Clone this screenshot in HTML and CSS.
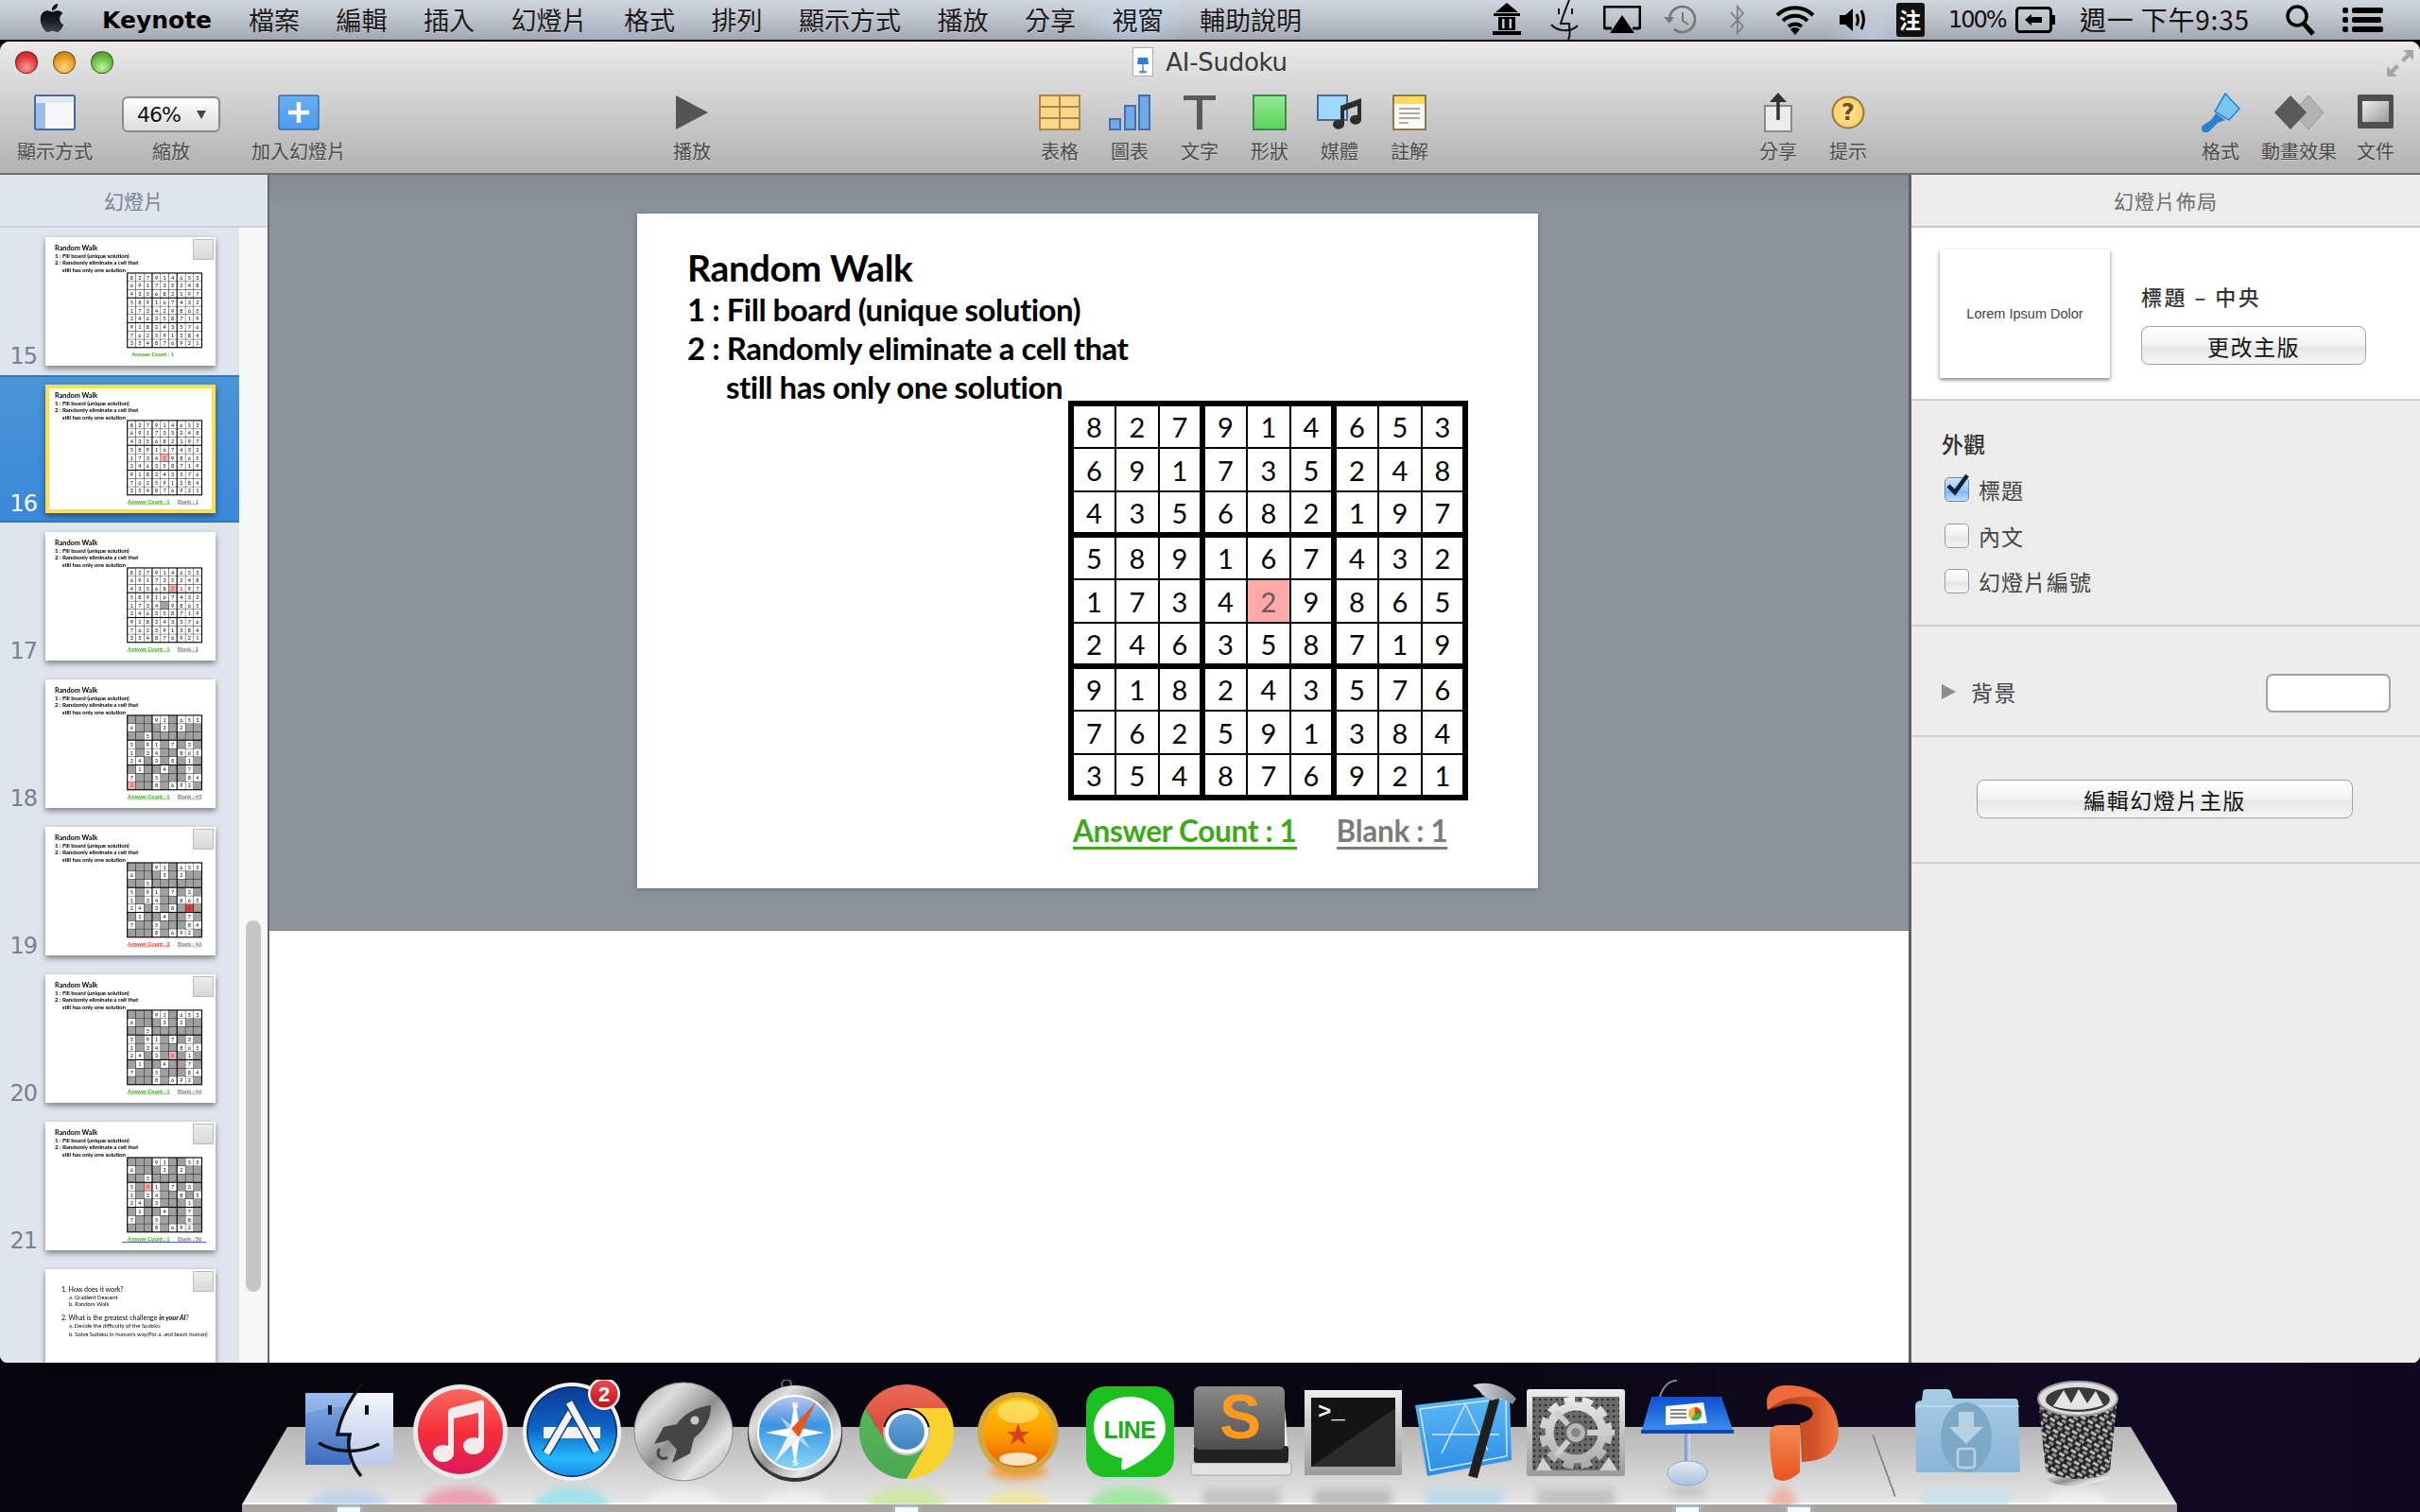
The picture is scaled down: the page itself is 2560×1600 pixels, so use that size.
FILE: index.html
```html
<!DOCTYPE html>
<html lang="zh-Hant">
<head>
<meta charset="utf-8">
<title>AI-Sudoku</title>
<link rel="stylesheet" href="styles.css">
</head>
<body>
<header class="menubar">
  <div class="menu-left">
    <svg class="apple" viewBox="0 0 24 24"><path fill="url(#appleGrad)" d="M12.152 6.896c-.948 0-2.415-1.078-3.96-1.04-2.04.027-3.91 1.183-4.961 3.014-2.117 3.675-.546 9.103 1.519 12.09 1.013 1.454 2.208 3.09 3.792 3.039 1.52-.065 2.09-.987 3.935-.987 1.831 0 2.35.987 3.96.948 1.637-.026 2.676-1.48 3.676-2.948 1.156-1.688 1.636-3.325 1.662-3.415-.039-.013-3.182-1.221-3.22-4.857-.026-3.04 2.48-4.494 2.597-4.559-1.429-2.09-3.623-2.324-4.39-2.376-2-.156-3.675 1.09-4.61 1.09zM15.53 3.83c.843-1.012 1.4-2.427 1.245-3.83-1.207.052-2.662.805-3.532 1.818-.78.896-1.454 2.338-1.273 3.714 1.338.104 2.715-.688 3.559-1.701"/></svg>
    <span class="app-name">Keynote</span>
    <nav class="menu-items">
      <span>檔案</span><span>編輯</span><span>插入</span><span>幻燈片</span><span>格式</span><span>排列</span><span>顯示方式</span><span>播放</span><span>分享</span><span>視窗</span><span>輔助說明</span>
    </nav>
  </div>
  <div class="menu-right">
    <span class="status"><svg width="36" height="38" viewBox="0 0 36 38"><path d="M18 1 L30 11 H6Z M4 12 H32 V15 H4Z M9 16 H27 V30 H9Z M3 31 H33 V35 H3Z"/><rect x="13" y="18" width="2.5" height="10" fill="#c8ccd4"/><rect x="20.500" y="18" width="2.500" height="10" fill="#c8ccd4"/></svg></span>
    <span class="status"><svg width="32" height="42" viewBox="0 0 32 42"><path d="M21 0 C17 10 14 18 12 25 H21 C21 31 23 37 20 42" fill="none" stroke="#111" stroke-width="2"/><path d="M2 26 C8 33 22 35 30 27" fill="none" stroke="#111" stroke-width="2"/><path d="M10 9 V15 M24 9 V15" stroke="#111" stroke-width="2"/></svg></span>
    <span class="status"><svg width="40" height="30" viewBox="0 0 40 30"><path d="M9 24 H3 Q1 24 1 22 V3 Q1 1 3 1 H37 Q39 1 39 3 V22 Q39 24 37 24 H31" fill="none" stroke="#000" stroke-width="3"/><path d="M20 10 L33 29 H7Z"/></svg></span>
    <span class="status"><svg width="36" height="34" viewBox="0 0 36 34"><path d="M7 17 A13.500 13.500 0 1 1 12 27" fill="none" stroke="#777" stroke-width="2.600"/><path d="M1 14 H12 L7 21Z" fill="#777"/><path d="M21 9 V18 L27 22" fill="none" stroke="#777" stroke-width="2"/></svg></span>
    <span class="status"><svg width="18" height="34" viewBox="0 0 18 34"><path d="M2 9 L15 24 L9 31 V3 L15 10 L2 25" fill="none" stroke="#7d8087" stroke-width="1.800"/></svg></span>
    <span class="status"><svg width="44" height="34" viewBox="0 0 44 34"><path d="M3 12 A27 27 0 0 1 41 12 M9 18 A19 19 0 0 1 35 18 M15 24 A11 11 0 0 1 29 24" fill="none" stroke="#000" stroke-width="4"/><path d="M22 33 L17 27 A7 7 0 0 1 27 27Z"/></svg></span>
    <span class="status"><svg width="30" height="28" viewBox="0 0 30 28"><path d="M1 9 H7 L15 2 V26 L7 19 H1Z"/><path d="M19 8 Q22 14 19 20 M24 4 Q29 14 24 24" fill="none" stroke="#000" stroke-width="3"/></svg></span>
    <span class="status"><span class="ime">注</span></span>
    <span class="battery-pct">100%</span>
    <svg class="battery" width="43" height="28" viewBox="0 0 43 28"><rect x="1.500" y="1.500" width="36" height="25" rx="3" fill="none" stroke="#000" stroke-width="3"/><rect x="39" y="9" width="3" height="10"/><path d="M10 14 L17 8 V11 H28 V17 H17 V20Z"/></svg>
    <span class="clock">週一 下午9:35</span>
    <svg class="search" width="32" height="34" viewBox="0 0 32 34"><circle cx="13" cy="13" r="10" fill="none" stroke="#000" stroke-width="3.500"/><path d="M20 21 L30 32" stroke="#000" stroke-width="5"/></svg>
    <svg class="notif" width="44" height="26" viewBox="0 0 44 26"><rect x="0" y="0" width="6" height="6" rx="2"/><rect x="0" y="10" width="6" height="6" rx="2"/><rect x="0" y="20" width="6" height="6" rx="2"/><rect x="10" y="0" width="33" height="6" rx="2"/><rect x="10" y="10" width="31" height="6" rx="2"/><rect x="10" y="20" width="33" height="6" rx="2"/></svg>
  </div>
</header>

<main class="window">
  <section class="chrome">
    <div class="titlebar">
      <div class="lights">
        <i class="light light-red"></i><i class="light light-amber"></i><i class="light light-green"></i>
      </div>
      <div class="doc-title">
        <svg width="22" height="31" viewBox="0 0 22 31"><rect x=".5" y=".5" width="21" height="30" fill="#fff" stroke="#aaa"/><path d="M6 11 H16 L17 18 H5Z" fill="#2b7fd8"/><path d="M11 18 V25" stroke="#6b8bb0" stroke-width="1.500"/><ellipse cx="11" cy="26" rx="4" ry="1.500" fill="#6b8bb0"/></svg>
        <span>AI-Sudoku</span>
      </div>
      <div class="full">
        <svg width="28" height="28" viewBox="0 0 28 28"><path d="M17 0 H28 V11 L24 7 L18 13 L15 10 L21 4Z M11 28 H0 V17 L4 21 L10 15 L13 18 L7 24Z" fill="#a5a5a5"/></svg>
      </div>
    </div>
    <div class="toolbar">
      <div class="tool tool-view">
        <svg class="tool-icon" width="44" height="38" viewBox="0 0 44 38"><rect x="1" y="1" width="42" height="36" rx="2" fill="#f7f7f9" stroke="#47699a" stroke-width="2"/><rect x="2" y="2" width="40" height="7" fill="#dfe7f3"/><rect x="2" y="9" width="10" height="27" fill="#9cbdea"/></svg>
        <span>顯示方式</span>
      </div>
      <div class="tool tool-zoom">
        <div class="zoom-box"><b>46%</b><i class="caret"></i></div>
        <span>縮放</span>
      </div>
      <div class="tool tool-add">
        <svg class="tool-icon" width="44" height="38" viewBox="0 0 44 38"><rect x="1" y="1" width="42" height="36" rx="2" fill="url(#addGrad)" stroke="#3e6ea8" stroke-width="1.500"/><path d="M22 8 V30 M11 19 H33" stroke="#fff" stroke-width="4.500"/></svg>
        <span>加入幻燈片</span>
      </div>
      <div class="tool tool-play">
        <svg class="tool-icon" width="36" height="38" viewBox="0 0 36 38"><path d="M1 1 L35 19 L1 37Z" fill="#555"/></svg>
        <span>播放</span>
      </div>
      <div class="tool tool-table">
        <svg class="tool-icon" width="44" height="38" viewBox="0 0 44 38"><rect x="1" y="1" width="42" height="36" fill="#fcd787" stroke="#a9864e" stroke-width="2"/><path d="M22 1 V37 M1 13 H43 M1 25 H43" stroke="#a9864e" stroke-width="2"/></svg>
        <span>表格</span>
      </div>
      <div class="tool">
        <svg class="tool-icon" width="44" height="38" viewBox="0 0 44 38"><g fill="#6ea9ea" stroke="#4770a8" stroke-width="2"><rect x="1" y="26" width="11" height="11"/><rect x="17" y="12" width="11" height="25"/><rect x="32" y="1" width="11" height="36"/></g></svg>
        <span>圖表</span>
      </div>
      <div class="tool">
        <svg class="tool-icon" width="36" height="38" viewBox="0 0 36 38"><path d="M1 1 H35 V6 H21 V37 H15 V6 H1Z" fill="#5a5a5a"/></svg>
        <span>文字</span>
      </div>
      <div class="tool">
        <svg class="tool-icon" width="36" height="38" viewBox="0 0 36 38"><rect x="1" y="1" width="34" height="36" fill="url(#shapeGrad)" stroke="#3f8a4c" stroke-width="2"/></svg>
        <span>形狀</span>
      </div>
      <div class="tool">
        <svg class="tool-icon" width="48" height="38" viewBox="0 0 48 38"><rect x="1" y="1" width="31" height="26" fill="#9ed8fb" stroke="#48699d" stroke-width="2"/><path d="M25 12 L47 4 V27 A6 5 0 1 1 43 22 V12 L29 17 V32 A6 5 0 1 1 25 27Z" fill="#2d2d2d"/></svg>
        <span>媒體</span>
      </div>
      <div class="tool">
        <svg class="tool-icon" width="36" height="38" viewBox="0 0 36 38"><rect x="1" y="1" width="34" height="36" fill="#f9f9f4" stroke="#8c7a4e" stroke-width="2"/><rect x="2" y="2" width="32" height="8" fill="#fbd95b"/><path d="M7 15 H29 M7 20 H29 M7 25 H29 M7 30 H17" stroke="#aaa" stroke-width="2"/></svg>
        <span>註解</span>
      </div>
      <div class="tool tool-share">
        <svg class="tool-icon" width="30" height="42" viewBox="0 0 30 42"><rect x="1" y="14" width="28" height="27" fill="#ececec" stroke="#8a8a8a" stroke-width="2"/><path d="M15 2 V29" stroke="#333" stroke-width="3.500"/><path d="M15 0 L24 10 H6Z" fill="#333"/></svg>
        <span>分享</span>
      </div>
      <div class="tool">
        <svg class="tool-icon" width="36" height="38" viewBox="0 0 36 36"><circle cx="18" cy="18" r="16.500" fill="url(#helpGrad)" stroke="#96743e" stroke-width="2"/><text x="18" y="26" class="help-q">?</text></svg>
        <span>提示</span>
      </div>
      <div class="tool tool-format">
        <svg class="tool-icon" width="42" height="42" viewBox="0 0 42 42"><path d="M26 1 L41 17 L30 29 L15 20Z" fill="#79c6f5" stroke="#2b7fd0" stroke-width="1.500"/><path d="M16 22 L26 29 L18 32 L9 41 A4 4 0 0 1 2 35 L11 29Z" fill="#2b7fd0"/></svg>
        <span>格式</span>
      </div>
      <div class="tool tool-anim">
        <svg class="tool-icon" width="54" height="38" viewBox="0 0 54 38"><path d="M37 1 L53 19 L37 37 L21 19Z" fill="#b3b3b3" stroke="#999"/><path d="M18 1 L35 19 L18 37 L1 19Z" fill="#595959"/></svg>
        <span>動畫效果</span>
      </div>
      <div class="tool tool-doc">
        <svg class="tool-icon" width="38" height="38" viewBox="0 0 38 38"><rect x="0" y="0" width="38" height="36" rx="2" fill="#4f4f4f"/><rect x="5" y="7" width="28" height="22" fill="url(#docGrad)"/></svg>
        <span>文件</span>
      </div>
    </div>
  </section>

  <section class="workspace">
    <aside class="sidebar">
      <h2 class="panel-title">幻燈片</h2>
      <div class="side-body">
        <div class="thumb-list" id="thumbs"></div>
        <div class="scroll-track"><div class="scroll-thumb"></div></div>
      </div>
    </aside>

    <div class="stage">
      <div class="canvas"><div id="mainSlide"></div></div>
      <div class="below"></div>
    </div>

    <aside class="inspector">
      <h2 class="panel-title">幻燈片佈局</h2>
      <div class="master">
        <div class="master-thumb">Lorem Ipsum Dolor</div>
        <div class="master-info">
          <div class="master-name">標題 – 中央</div>
          <button class="btn btn-change">更改主版</button>
        </div>
      </div>
      <div class="section section-look">
        <div class="section-head">外觀</div>
        <label class="check-row"><span class="check check-on"><svg width="30" height="30" viewBox="0 0 30 30"><path d="M5 14 L12 21 L25 3" fill="none" stroke="#0e2240" stroke-width="4.500"/></svg></span>標題</label>
        <label class="check-row"><span class="check"></span>內文</label>
        <label class="check-row"><span class="check"></span>幻燈片編號</label>
      </div>
      <div class="section section-bg">
        <i class="disclosure"></i>
        <span class="bg-label">背景</span>
        <span class="swatch"></span>
      </div>
      <div class="section section-edit">
        <button class="btn btn-edit">編輯幻燈片主版</button>
      </div>
    </aside>
  </section>
</main>

<footer class="dock">
  <div class="shelf"><i class="shelf-sep"></i></div>
  <div class="dock-row">
    <!-- Finder -->
    <div class="dock-item running"><svg viewBox="0 0 118 132" width="118" height="132">
      <ellipse cx="59" cy="134" rx="42" ry="17" fill="#8ab8f4" filter="url(#soft)" opacity=".4"/>
      <rect x="13" y="14" width="93" height="76" fill="url(#finderR)"/>
      <path d="M13 14 H66 C56 32 50 44 48 58 H62 C60 68 60 80 61 90 H13Z" fill="url(#finderL)"/>
      <path d="M13 14 H106 V32 C74 26 40 26 13 36Z" fill="#fff" opacity=".18"/>
      <path d="M73 4 C58 24 50 40 47 58 H60 C56 72 62 90 72 102" fill="none" stroke="#111" stroke-width="3.500"/>
      <path d="M27 67 C46 78 72 78 91 68" fill="none" stroke="#111" stroke-width="3.500"/>
      <path d="M39 27 V37 M78 27 V37" stroke="#111" stroke-width="4"/>
    </svg></div>
    <!-- iTunes -->
    <div class="dock-item"><svg viewBox="0 0 118 132" width="118" height="132">
      <ellipse cx="59" cy="134" rx="40" ry="20" fill="#ef6d8c" filter="url(#soft)" opacity=".55"/>
      <circle cx="59" cy="55" r="50" fill="#e9e9e9"/>
      <circle cx="59" cy="55" r="45" fill="url(#itunesGrad)"/>
      <path d="M46 34 Q46 31 49 30 L80 22 Q84 21 84 25 V70 A11 9 0 1 1 78 62 V35 L52 41 V78 A11 9 0 1 1 46 70Z" fill="#f4ecec"/>
    </svg></div>
    <!-- App Store -->
    <div class="dock-item"><svg viewBox="0 0 118 132" width="118" height="132">
      <ellipse cx="59" cy="134" rx="40" ry="20" fill="#7fe0ee" filter="url(#soft)" opacity=".65"/>
      <circle cx="59" cy="55" r="52" fill="#f2f2f2"/>
      <circle cx="59" cy="55" r="48" fill="#062a66"/>
      <circle cx="59" cy="55" r="46.500" fill="url(#appstoreGrad)"/>
      <rect x="29" y="50" width="60" height="12" fill="#f2f2f2"/>
      <path d="M58 34 L32 78" stroke="#123f80" stroke-width="10"/><path d="M58 34 L32 78" stroke="#f4f4f4" stroke-width="7"/>
      <path d="M56 24 L85 76" stroke="#123f80" stroke-width="10"/><path d="M56 24 L85 76" stroke="#f4f4f4" stroke-width="7"/>
      <circle cx="93" cy="15" r="17" fill="#f6f6f6"/><circle cx="93" cy="15" r="14.500" fill="url(#badgeGrad)"/>
      <text x="93" y="23" class="badge-text">2</text>
    </svg></div>
    <!-- Launchpad -->
    <div class="dock-item"><svg viewBox="0 0 118 132" width="118" height="132">
      <ellipse cx="59" cy="134" rx="40" ry="20" fill="#fff" filter="url(#soft)" opacity=".45"/>
      <circle cx="59" cy="55" r="52" fill="url(#metalGrad)" stroke="#8b8b8b"/>
      <path d="M88 27 C72 29 60 36 52 47 L38 50 L28 68 L43 64 L52 74 L47 88 L66 78 L70 62 C82 52 88 42 88 27Z" fill="#454545"/>
      <circle cx="71" cy="43" r="4.500" fill="#c9c9c9"/>
      <path d="M34 73 A6 6 0 1 0 42 82" fill="none" stroke="#454545" stroke-width="3"/>
    </svg></div>
    <!-- Safari -->
    <div class="dock-item"><svg viewBox="0 0 118 132" width="118" height="132">
      <ellipse cx="59" cy="134" rx="36" ry="18" fill="#fff" filter="url(#soft)" opacity=".45"/>
      <circle cx="50" cy="5" r="5" fill="none" stroke="#666" stroke-width="2"/>
      <circle cx="59" cy="58" r="50" fill="#333"/>
      <circle cx="59" cy="55" r="49" fill="url(#metalGrad)"/>
      <circle cx="59" cy="56" r="39" fill="url(#safariGrad)" stroke="#fff" stroke-width="2"/>
      <path d="M59 22 L64 51 L90 56 L64 61 L59 90 L54 61 L28 56 L54 51Z" fill="#fff"/>
      <path d="M43 39 L62 53 L75 73 L56 59Z" fill="#fff" opacity=".55"/>
      <path d="M81 24 L63 61 L55 52Z" fill="#e8551f"/>
      <path d="M37 88 L55 52 L63 61Z" fill="#f0f0f0"/>
      <text x="59" y="30" class="compass">N</text><text x="59" y="91" class="compass">S</text>
    </svg></div>
    <!-- Chrome -->
    <div class="dock-item running"><svg viewBox="0 0 118 132" width="118" height="132">
      <ellipse cx="59" cy="134" rx="42" ry="20" fill="#c5e88a" filter="url(#soft)" opacity=".65"/>
      <path d="M15.700 30 A50 50 0 0 1 102.300 30 L59 30 A25 25 0 0 0 37.350 67.500Z" fill="url(#chromeRed)"/>
      <path d="M102.300 30 A50 50 0 0 1 59 105 L80.650 67.500 A25 25 0 0 0 59 30Z" fill="#fad22e"/>
      <path d="M59 105 A50 50 0 0 1 15.700 30 L37.350 67.500 A25 25 0 0 0 80.650 67.500Z" fill="url(#chromeGreen)"/>
      <circle cx="59" cy="55" r="23" fill="#fff"/><circle cx="59" cy="55" r="19" fill="url(#chromeBlue)"/>
    </svg></div>
    <!-- Dragon ball -->
    <div class="dock-item"><svg viewBox="0 0 118 132" width="118" height="132">
      <ellipse cx="59" cy="96" rx="30" ry="9" fill="#ff8a10" filter="url(#soft)" opacity=".8"/>
      <ellipse cx="59" cy="134" rx="34" ry="18" fill="#f5e87a" filter="url(#soft)" opacity=".55"/>
      <circle cx="59" cy="56" r="43" fill="#d3a63f"/>
      <circle cx="59" cy="56" r="37" fill="url(#ballGrad)"/>
      <ellipse cx="59" cy="34" rx="22" ry="12" fill="#fff2a0" opacity=".55"/>
      <ellipse cx="59" cy="84" rx="20" ry="7" fill="#fff1d0" opacity=".9"/>
      <path d="M59 46 L62 55 H71 L64 60 L67 69 L59 63 L51 69 L54 60 L47 55 H56Z" fill="#d8401a"/>
    </svg></div>
    <!-- LINE -->
    <div class="dock-item"><svg viewBox="0 0 118 132" width="118" height="132">
      <ellipse cx="59" cy="134" rx="44" ry="20" fill="#8be88c" filter="url(#soft)" opacity=".75"/>
      <rect x="13" y="7" width="93" height="96" rx="20" fill="#1dc11f"/>
      <path d="M59 18 C82 18 97 33 97 51 C97 68 79 83 54 95 C49 97 50 90 51 83 C33 80 21 67 21 51 C21 33 36 18 59 18Z" fill="#fff"/>
      <text x="59" y="62" class="line-text">LINE</text>
    </svg></div>
    <!-- Sublime -->
    <div class="dock-item"><svg viewBox="0 0 118 132" width="118" height="132">
      <rect x="18" y="116" width="82" height="22" fill="#8a8a8a" filter="url(#soft)" opacity=".35"/>
      <path d="M15 15 H103 L112 98 H7Z" fill="#ececec" stroke="#b5b5b5"/>
      <rect x="6" y="88" width="106" height="13" rx="3" fill="#e2e2e2" stroke="#a8a8a8"/>
      <rect x="9" y="70" width="100" height="18" rx="3" fill="#222"/>
      <rect x="9" y="7" width="96" height="67" rx="6" fill="url(#subGrad)"/>
      <text x="58" y="62" class="sub-text">S</text>
    </svg></div>
    <!-- Terminal -->
    <div class="dock-item"><svg viewBox="0 0 118 132" width="118" height="132">
      <rect x="18" y="116" width="82" height="22" fill="#777" filter="url(#soft)" opacity=".35"/>
      <rect x="8" y="11" width="103" height="90" fill="url(#frameGrad)"/>
      <rect x="15" y="19" width="89" height="73" fill="#141414"/>
      <path d="M15 92 L104 30 V92Z" fill="#2b2b2b"/>
      <text x="22" y="41" class="term-text">&gt;_</text>
    </svg></div>
    <!-- Xcode -->
    <div class="dock-item"><svg viewBox="0 0 118 132" width="118" height="132">
      <rect x="18" y="116" width="82" height="22" fill="#8ccff5" filter="url(#soft)" opacity=".45"/>
      <path d="M7 27 L107 15 L109 85 L20 102Z" fill="url(#xcodeGrad)"/>
      <path d="M12 31 L103 20 L104 81 L23 96Z M35 78 L60 26 L84 75 M25 58 H96" fill="none" stroke="#cfe9ff" stroke-width="1.500"/>
      <path d="M93 14 L68 103" stroke="#1f1f1f" stroke-width="10"/>
      <path d="M68 6 C82 0 102 6 114 20 L110 26 C100 18 92 20 88 22 L78 16 C76 12 72 9 68 6Z" fill="url(#hammerGrad)"/>
    </svg></div>
    <!-- System Preferences -->
    <div class="dock-item"><svg viewBox="0 0 118 132" width="118" height="132">
      <rect x="18" y="116" width="82" height="22" fill="#777" filter="url(#soft)" opacity=".3"/>
      <rect x="7" y="10" width="104" height="92" rx="3" fill="url(#frameGrad)"/>
      <rect x="13" y="18" width="92" height="78" fill="url(#dots)"/>
      <g fill="none" stroke="url(#gearGrad)">
        <circle cx="59" cy="56" r="28" stroke-width="9"/>
        <circle cx="59" cy="56" r="34" stroke-width="9" stroke-dasharray="11 7.500"/>
      </g>
      <path d="M59 56 L100 56 M59 56 L38 34 M59 56 L38 80" stroke="#cdcdcd" stroke-width="6"/>
      <path d="M17 96 L24 82 L34 96Z M84 96 L94 82 L103 96Z" fill="#d0d0d0"/>
      <circle cx="59" cy="56" r="11" fill="#b8b8b8" stroke="#666" stroke-width="2"/>
      <circle cx="59" cy="56" r="5" fill="#888"/>
    </svg></div>
    <!-- Keynote -->
    <div class="dock-item running"><svg viewBox="0 0 118 132" width="118" height="132">
      <ellipse cx="59" cy="118" rx="22" ry="8" fill="#aaa" filter="url(#soft)" opacity=".45"/>
      <path d="M48 1 C38 1 32 8 28 24" fill="none" stroke="#8a8a8a" stroke-width="2"/>
      <circle cx="27" cy="25" r="3" fill="#dfe6f2"/>
      <rect x="56" y="56" width="6" height="38" fill="url(#poleGrad)"/>
      <ellipse cx="59" cy="99" rx="21" ry="13" fill="url(#baseGrad)" stroke="#8ea7cc"/>
      <path d="M21 18 H95 L108 56 H10Z" fill="url(#keyGrad)"/>
      <rect x="10" y="53" width="98" height="4" fill="#0e46ae"/>
      <path d="M36 28 L76 24 L80 46 L36 48Z" fill="#fafafa"/>
      <circle cx="67" cy="36" r="7" fill="#f0b82c"/><path d="M67 36 L67 29 A7 7 0 0 1 74 36Z" fill="#d93c2c"/><path d="M67 36 L74 36 A7 7 0 0 1 63 42Z" fill="#3cae4a"/>
      <path d="M41 32 H58 M41 36 H58 M41 40 H58" stroke="#888" stroke-width="2"/>
    </svg></div>
    <!-- PowerPoint -->
    <div class="dock-item running"><svg viewBox="0 0 118 132" width="118" height="132">
      <ellipse cx="42" cy="132" rx="14" ry="18" fill="#f29070" filter="url(#soft)" opacity=".55"/>
      <path d="M60 46 C82 42 78 22 44 26 L26 32 C22 14 32 6 46 6 C78 6 101 24 101 54 C101 74 90 86 62 87Z" fill="url(#pptBack)"/>
      <path d="M26 32 C22 14 32 6 46 6 C60 6 74 10 84 20 C70 16 44 16 26 32Z" fill="#f0693a"/>
      <path d="M28 58 Q28 48 38 48 H60 L60 98 Q44 112 33 104 Q28 84 28 58Z" fill="url(#pptStem)"/>
    </svg></div>
    <i class="dock-gap"></i>
    <!-- Downloads -->
    <div class="dock-item"><svg viewBox="0 0 118 132" width="118" height="132">
      <rect x="12" y="116" width="94" height="22" fill="#b6e3f0" filter="url(#soft)" opacity=".6"/>
      <path d="M13 14 Q13 10 17 10 H38 Q42 10 43 14 L45 20 H110 Q114 20 114 24 L116 98 H6 L5 28 Q5 22 12 22Z" fill="url(#folderGrad)"/>
      <path d="M6 28 H115" stroke="#c6e1f2" stroke-width="1.500"/>
      <ellipse cx="59" cy="61" rx="27" ry="37" fill="#7ea9c6"/>
      <path d="M51 34 H67 V50 H77 L59 68 L41 50 H51Z" fill="#b5d3e6"/>
      <rect x="50" y="73" width="18" height="20" rx="3" fill="none" stroke="#b5d3e6" stroke-width="2.500"/>
    </svg></div>
    <!-- Trash -->
    <div class="dock-item"><svg viewBox="0 0 118 132" width="118" height="132">
      <ellipse cx="59" cy="128" rx="32" ry="12" fill="#fff" filter="url(#soft)" opacity=".45"/>
      <path d="M17 18 L25 96 A34 12 0 0 0 93 96 L101 18Z" fill="url(#mesh)"/>
      <path d="M25 93 A34 12 0 0 0 93 93 L92 103 A33 10 0 0 1 26 103Z" fill="url(#metalGrad)"/>
      <ellipse cx="59" cy="20" rx="42" ry="18" fill="#dedede" stroke="#9b9b9b" stroke-width="2"/>
      <ellipse cx="59" cy="21" rx="34" ry="13" fill="#3a3a3a"/>
      <path d="M33 28 L44 11 L52 25 L60 10 L69 25 L78 12 L86 27 Q60 36 33 28Z" fill="#e5e5e5"/>
    </svg></div>
  </div>
</footer>

<svg class="svg-defs" width="0" height="0" aria-hidden="true">
  <defs>
    <filter id="soft" x="-50%" y="-100%" width="200%" height="300%"><feGaussianBlur stdDeviation="5"/></filter>
    <linearGradient id="appleGrad" x1="0" y1="0" x2="0" y2="1"><stop offset="0" stop-color="#000"/><stop offset=".6" stop-color="#1a1d26"/><stop offset="1" stop-color="#3d4656"/></linearGradient>
    <linearGradient id="addGrad" x1="0" y1="0" x2="0" y2="1"><stop offset="0" stop-color="#69aef3"/><stop offset="1" stop-color="#4d9af2"/></linearGradient>
    <linearGradient id="shapeGrad" x1="0" y1="0" x2="0" y2="1"><stop offset="0" stop-color="#94ea95"/><stop offset="1" stop-color="#59d35c"/></linearGradient>
    <radialGradient id="helpGrad"><stop offset="0" stop-color="#ffe79a"/><stop offset="1" stop-color="#fbcf68"/></radialGradient>
    <linearGradient id="docGrad" x1="0" y1="0" x2="1" y2="1"><stop offset="0" stop-color="#eee"/><stop offset="1" stop-color="#999"/></linearGradient>
    <linearGradient id="finderL" x1="0" y1="0" x2="0" y2="1"><stop offset="0" stop-color="#86aeea"/><stop offset="1" stop-color="#3f6cbd"/></linearGradient>
    <linearGradient id="finderR" x1="0" y1="0" x2="0" y2="1"><stop offset="0" stop-color="#eef2fb"/><stop offset="1" stop-color="#bccbeb"/></linearGradient>
    <linearGradient id="itunesGrad" x1="0" y1="0" x2="0" y2="1"><stop offset="0" stop-color="#fb6a5c"/><stop offset=".5" stop-color="#f52f3c"/><stop offset="1" stop-color="#dc1a5a"/></linearGradient>
    <linearGradient id="appstoreGrad" x1="0" y1="0" x2="0" y2="1"><stop offset="0" stop-color="#0c3a94"/><stop offset=".45" stop-color="#0d62c8"/><stop offset=".8" stop-color="#25b8fa"/><stop offset="1" stop-color="#1a8fe6"/></linearGradient>
    <linearGradient id="badgeGrad" x1="0" y1="0" x2="0" y2="1"><stop offset="0" stop-color="#ea4a50"/><stop offset="1" stop-color="#c5101c"/></linearGradient>
    <linearGradient id="metalGrad" x1="0" y1="0" x2="1" y2="1"><stop offset="0" stop-color="#9a9a9a"/><stop offset=".25" stop-color="#dedede"/><stop offset=".5" stop-color="#8f8f8f"/><stop offset=".75" stop-color="#e6e6e6"/><stop offset="1" stop-color="#9c9c9c"/></linearGradient>
    <linearGradient id="safariGrad" x1="0" y1="0" x2="0" y2="1"><stop offset="0" stop-color="#bcc8f0"/><stop offset=".4" stop-color="#3c94e0"/><stop offset="1" stop-color="#89d8f8"/></linearGradient>
    <linearGradient id="chromeRed" x1="0" y1="0" x2="0" y2="1"><stop offset="0" stop-color="#ea6a5a"/><stop offset="1" stop-color="#d8402e"/></linearGradient>
    <linearGradient id="chromeGreen" x1="0" y1="0" x2="0" y2="1"><stop offset="0" stop-color="#58b560"/><stop offset="1" stop-color="#4aa84e"/></linearGradient>
    <linearGradient id="chromeBlue" x1="0" y1="0" x2="0" y2="1"><stop offset="0" stop-color="#6ba4d8"/><stop offset="1" stop-color="#3a83c4"/></linearGradient>
    <linearGradient id="ballGrad" x1="0" y1="0" x2="0" y2="1"><stop offset="0" stop-color="#ffc800"/><stop offset=".55" stop-color="#ff9a00"/><stop offset="1" stop-color="#e85c00"/></linearGradient>
    <linearGradient id="subGrad" x1="0" y1="0" x2="0" y2="1"><stop offset="0" stop-color="#8a8a8a"/><stop offset="1" stop-color="#4e4e4e"/></linearGradient>
    <linearGradient id="frameGrad" x1="0" y1="0" x2="0" y2="1"><stop offset="0" stop-color="#ededed"/><stop offset="1" stop-color="#9a9a9a"/></linearGradient>
    <linearGradient id="xcodeGrad" x1="0" y1="0" x2="0" y2="1"><stop offset="0" stop-color="#5eb8f5"/><stop offset="1" stop-color="#2b8de4"/></linearGradient>
    <linearGradient id="hammerGrad" x1="0" y1="0" x2="1" y2="0"><stop offset="0" stop-color="#dcdcdc"/><stop offset="1" stop-color="#7d8a92"/></linearGradient>
    <linearGradient id="gearGrad" gradientUnits="userSpaceOnUse" x1="0" y1="10" x2="0" y2="100"><stop offset="0" stop-color="#f0f0f0"/><stop offset="1" stop-color="#a4a4a4"/></linearGradient>
    <linearGradient id="poleGrad" x1="0" y1="0" x2="1" y2="0"><stop offset="0" stop-color="#6d8cc0"/><stop offset="1" stop-color="#d7e2f2"/></linearGradient>
    <linearGradient id="baseGrad" x1="0" y1="0" x2="0" y2="1"><stop offset="0" stop-color="#e6ecf6"/><stop offset="1" stop-color="#a9bfdf"/></linearGradient>
    <linearGradient id="keyGrad" x1="0" y1="0" x2="0" y2="1"><stop offset="0" stop-color="#0f4fd0"/><stop offset="1" stop-color="#3f8ff0"/></linearGradient>
    <linearGradient id="pptBack" x1="0" y1="0" x2="1" y2="0"><stop offset="0" stop-color="#a53c14"/><stop offset=".7" stop-color="#d6552a"/><stop offset="1" stop-color="#f07a45"/></linearGradient>
    <linearGradient id="pptStem" x1="0" y1="0" x2="0" y2="1"><stop offset="0" stop-color="#f58a55"/><stop offset="1" stop-color="#e8531e"/></linearGradient>
    <linearGradient id="folderGrad" x1="0" y1="0" x2="0" y2="1"><stop offset="0" stop-color="#a7cde6"/><stop offset="1" stop-color="#8ab5d4"/></linearGradient>
    <pattern id="dots" width="6" height="6" patternUnits="userSpaceOnUse"><rect width="6" height="6" fill="#6b6b6b"/><circle cx="3" cy="3" r="1.300" fill="#2c2c2c"/></pattern>
    <pattern id="mesh" width="9" height="9" patternUnits="userSpaceOnUse" patternTransform="rotate(30)"><rect width="9" height="9" fill="#262626"/><rect x="1" y="1" width="6" height="3" fill="#bcbcbc"/><rect x="4" y="5.500" width="6" height="3" fill="#9a9a9a"/></pattern>
  </defs>
</svg>
<script src="script.js"></script>
</body>
</html>
```

FILE: styles.css
```css
* { box-sizing: border-box; }
html, body { margin: 0; padding: 0; }
body {
  width: 2560px;
  height: 1600px;
  overflow: hidden;
  display: flex;
  flex-direction: column;
  background: #08060f;
  font-family: "Noto Sans CJK TC", "Liberation Sans", sans-serif;
  color: #222;
}
.svg-defs { display: block; height: 0; width: 0; }

/* menu bar */
.menubar {
  height: 44px;
  flex: none;
  display: flex;
  border-bottom: 2px solid #0b0b0e;
  background:
    radial-gradient(ellipse 60px 40px at 1200px 20px, rgba(190,225,255,.55), transparent),
    radial-gradient(ellipse 70px 30px at 640px 42px, rgba(170,200,255,.3), transparent),
    radial-gradient(ellipse 50px 30px at 1980px 38px, rgba(200,225,255,.5), transparent),
    linear-gradient(#d0d4dd, #c2c6cf 40%, #a3a7b1);
  overflow: hidden;
}
.menu-left { flex: 1; display: flex; align-items: center; padding-left: 40px; }
.apple { width: 30px; height: 36px; margin-top: -4px; }
.app-name { font: bold 25px "DejaVu Sans", sans-serif; margin-left: 38px; color: #000; text-shadow: 0 1px 0 rgba(255,255,255,.4); }
.menu-items { display: flex; gap: 38.500px; margin: -2px 0 0 39px; font-size: 27px; color: #1a1a1a; text-shadow: 0 1px 0 rgba(255,255,255,.4); }
.menu-right { width: 997px; flex: none; display: flex; align-items: center; }
.status { width: 61px; display: flex; justify-content: center; align-items: center; flex: none; }
.ime { width: 30px; height: 36px; background: #111; color: #fff; border-radius: 3px; font-size: 23px; font-weight: 700; line-height: 34px; text-align: center; display: block; }
.battery-pct { margin-left: 10px; font: 24px "DejaVu Sans", sans-serif; letter-spacing: -2px; color: #111; width: 61px; white-space: nowrap; flex: none; }
.battery { margin-left: 10px; flex: none; }
.clock { margin-left: 25px; width: 180px; font-size: 28px; letter-spacing: .8px; color: #111; white-space: nowrap; flex: none; margin-top: -2px; }
.search { margin-left: 37px; flex: none; }
.notif { margin-left: 29px; flex: none; }

/* window */
.window {
  width: 2560px;
  height: 1398px;
  flex: none;
  display: flex;
  flex-direction: column;
  border-radius: 10px 10px 8px 8px;
  overflow: hidden;
  background: #fff;
}
.chrome {
  height: 141px;
  flex: none;
  background: linear-gradient(#eaeaea, #dcdcdc 25%, #b2b2b2);
  border-bottom: 2px solid #6f6f72;
}
.titlebar { height: 54px; display: grid; grid-template-columns: 1fr auto 1fr; align-items: start; }
.lights { display: flex; gap: 16px; padding: 10px 0 0 16px; }
.light { width: 24px; height: 24px; border-radius: 50%; display: block; border: 1px solid rgba(0,0,0,.45); }
.light-red { background: radial-gradient(circle at 50% 75%, #ff9a9a, #e63b3b 55%, #a81c1c); }
.light-amber { background: radial-gradient(circle at 50% 75%, #ffd87e, #eb9c22 55%, #a86a12); }
.light-green { background: radial-gradient(circle at 50% 75%, #b9f59a, #6cbb48 55%, #3f8428); }
.doc-title { display: flex; align-items: center; gap: 13px; font: 26px "DejaVu Sans", sans-serif; letter-spacing: -.3px; color: #3a3a3a; padding-top: 6px; }
.full { justify-self: end; margin: 9px 7px 0 0; display: flex; }

.toolbar { display: flex; padding-left: 18px; }
.tool { width: 74px; display: flex; flex-direction: column; align-items: center; font-size: 20px; color: #4c4c4c; white-space: nowrap; text-shadow: 0 1px 0 rgba(255,255,255,.35); }
.tool > span { line-height: 28px; margin-top: 6px; }
.tool-icon { height: 42px; display: block; flex: none; }
.tool-view { width: 80px; }
.tool-zoom { width: 104px; margin-left: 31px; }
.tool-add { width: 100px; margin-left: 33px; }
.tool-play { margin-left: 329px; }
.tool-table { margin-left: 315px; }
.tool-share { margin-left: 316px; }
.tool-format { margin-left: 320px; }
.tool-anim { width: 92px; }
.tool-doc { width: 70px; }
.zoom-box {
  width: 104px; height: 38px; margin-top: 4px; margin-bottom: 0;
  display: flex; align-items: center; padding-left: 14px;
  border: 2px solid #8a8a8a; border-radius: 6px;
  background: linear-gradient(#fff, #ebebeb 55%, #dcdcdc);
}
.zoom-box b { font: 22px "DejaVu Sans", sans-serif; letter-spacing: -1px; color: #111; }
.caret { margin-left: 17px; border: 5px solid transparent; border-top: 9px solid #444; border-bottom: 0; display: block; }
.help-q { font: bold 24px "DejaVu Sans", sans-serif; fill: #6b5020; text-anchor: middle; }

/* workspace */
.workspace { flex: 1; display: flex; min-height: 0; }
.panel-title { margin: 0; height: 56px; font-size: 21px; font-weight: 400; line-height: 54px; text-align: center; flex: none; }
.sidebar { width: 285px; flex: none; display: flex; flex-direction: column; background: #e0e4ec; border-right: 2px solid #66676c; }
.sidebar .panel-title { color: #7b8494; border-bottom: 2px solid #cdd1da; }
.side-body { flex: 1; display: flex; min-height: 0; }
.thumb-list { width: 253px; flex: none; overflow: hidden; }
.scroll-track { flex: 1; background: #f7f7f7; padding: 733px 7px 0; }
.scroll-thumb { width: 16px; height: 393px; background: #c6c6c6; border-radius: 8px; }

.thumb-row { height: 156px; padding-top: 10px; display: flex; }
.thumb-row.is-current { background: linear-gradient(#4a95d6, #3b88d9); border-top: 2px solid #2f79bd; border-bottom: 2px solid #2f79bd; padding-top: 8px; margin-bottom: 0; }
.thumb-num { width: 39px; flex: none; align-self: flex-start; height: 136px; display: flex; align-items: flex-end; justify-content: flex-end; font: 24px/20px "DejaVu Sans", sans-serif; letter-spacing: -1px; color: #77818f; }
.is-current .thumb-num { color: #fff; }
.thumb { width: 180px; height: 136px; margin-left: 9px; position: relative; overflow: hidden; background: #fff; box-shadow: 0 3px 6px rgba(0,0,0,.45); flex: none; }
.is-current .thumb::after { content: ""; position: absolute; inset: 0; border: 4px solid #fddd52; }
.thumb-inner { transform: scale(.1889); transform-origin: 0 0; }
.thumb-box { position: absolute; top: 2px; right: 2px; width: 22px; height: 22px; background: linear-gradient(#ececec, #d8d8d8); border: 1px solid #bbb; }
.thumb-mark { position: absolute; left: 81px; top: 127px; width: 89px; height: 1px; background: #3a68d8; }

/* stage */
.stage { flex: 1; display: flex; flex-direction: column; min-width: 0; }
.canvas { height: 800px; flex: none; padding: 41px 0 0 389px; background: linear-gradient(#838a94, #8b929c 30px); border-bottom: 1px solid #7f858e; }
.below { flex: 1; background: #fff; }

/* slide */
.slide { width: 953px; height: 714px; background: #fff; padding: 36px 0 0 53px; font-family: Lato, "Liberation Sans", sans-serif; color: #000; }
.slide-main { box-shadow: 0 1px 5px rgba(0,0,0,.25); }
.slide-title { font-size: 39px; font-weight: 700; line-height: 42px; margin: 0 0 3px; letter-spacing: -.3px; }
.slide-line { font-size: 33px; font-weight: 700; line-height: 41px; white-space: pre; letter-spacing: -.5px; }
.line-indent { padding-left: 41px; }
.sudoku { width: 423px; margin: -6px 0 0 403px; background: #000; padding: 6px; display: grid; grid-template-columns: repeat(3, 133px); gap: 6px; }
.box { display: grid; grid-template-columns: 43px 44px 42px; grid-auto-rows: 43px; gap: 2px; background: #000; }
.box-row-b { grid-template-rows: 43px 44px 42px; }
.cell { background: #fff; display: flex; align-items: center; justify-content: center; font-size: 29px; line-height: 1; }
.cell.blank { background: #a0a0a0; color: transparent; }
.cell.hl-pink { background: #ffa8a8; color: #6e5a5a; }
.cell.hl-red { background: #d9403c; color: #7a1a1a; }
.counts { display: flex; gap: 42px; margin: 16px 0 0 408px; font-size: 31.500px; font-weight: 700; line-height: 33px; white-space: nowrap; letter-spacing: -.3px; }
.counts span { padding-bottom: 0; border-bottom: 3px solid currentColor; }
.counts .plain { border-bottom-color: transparent; margin-left: 22px; }
.c-green { color: #3fa81a; }
.c-red { color: #e4352b; }
.c-gray { color: #7b7b7b; }
.slide.slide-list { padding: 89px 0 0 90px; }
.list-head { font-size: 37.500px; line-height: 44px; white-space: nowrap; }
.list-sub { font-size: 31.500px; line-height: 37px; padding-left: 42px; white-space: nowrap; }
.list-head + .list-sub { margin-top: 8px; }
.list-sub + .list-head { margin-top: 33px; }
.list-sub.list-sub-b { margin-top: 10px; }

/* inspector */
.inspector { width: 541px; flex: none; background: #ececec; display: flex; flex-direction: column; border-left: 3px solid #5f6064; }
.inspector .panel-title { color: #6d6d6d; border-bottom: 2px solid #c6c6c6; letter-spacing: 1px; }
.master { height: 183px; background: #fff; display: flex; border-bottom: 2px solid #cfcfcf; padding: 23px 0 0 30px; flex: none; }
.master-thumb { width: 180px; height: 136px; background: #fff; box-shadow: 0 2px 4px rgba(0,0,0,.5); font: 14.500px/136px "Liberation Sans", sans-serif; color: #444; text-align: center; flex: none; }
.master-info { margin-left: 33px; padding-top: 33px; }
.master-name { font-size: 22px; font-weight: 500; line-height: 32px; color: #333; letter-spacing: 2.500px; white-space: nowrap; }
.btn { display: block; font-family: inherit; color: #111; background: linear-gradient(#fff, #f2f2f2 50%, #e6e6e6 55%, #f5f5f5); border: 1.500px solid #a2a2a2; border-radius: 8px; padding: 0; font-size: 23px; height: 41px; line-height: 36px; letter-spacing: 1.500px; }
.btn-change { width: 238px; margin-top: 16px; }
.section { border-bottom: 2px solid #cfcfcf; flex: none; }
.section-look { height: 239px; padding: 27px 0 0 32px; }
.section-head { font-size: 23px; font-weight: 500; line-height: 36px; color: #333; margin-bottom: 7px; }
.check-row { display: flex; align-items: center; height: 48.500px; font-size: 23px; color: #444; padding-left: 3px; letter-spacing: 1px; }
.check { position: relative; width: 26px; height: 26px; margin-right: 10px; border: 1.500px solid #9c9c9c; border-radius: 5px; background: linear-gradient(#fff, #f0f0f0 50%, #e4e4e4 55%, #f4f4f4); flex: none; }
.check-on { background: linear-gradient(#cfe4fa, #9ccaf5 50%, #7fb8f0 60%, #bfe0fb); border-color: #6a86a8; }
.check svg { position: absolute; left: -2px; top: -6px; }
.section-bg { height: 117px; display: flex; align-items: center; padding: 22px 31px 0 32px; }
.disclosure { border: 8.500px solid transparent; border-left: 15px solid #8c8c8c; border-right: 0; display: block; }
.bg-label { margin-left: 16px; font-size: 23px; color: #444; letter-spacing: 1.500px; flex: 1; }
.swatch { width: 132px; height: 41px; margin-top: 3px; background: #fff; border: 2px solid #a2a2a2; border-radius: 7px; }
.section-edit { height: 134px; padding: 45px 0 0 69px; }
.btn-edit { width: 398px; }

/* dock */
.dock { flex: 1; position: relative; padding-top: 18px; background: linear-gradient(90deg, #06040c, #0a0714 60%, #120a24 90%, #100820); min-height: 0; overflow: hidden; }
.shelf {
  position: absolute; left: 256px; top: 68px; width: 2047px; height: 90px;
  background: linear-gradient(#b8b6b6 0, #c6c5c5 30%, #dcdbdb 70%, #e6e6e6 89%, #fff 89%, #fff 91.500%, #a6a5a3 91.500%);
  clip-path: polygon(48px 0, 1998px 0, 2047px 82px, 2047px 90px, 0 90px, 0 82px);
}
.shelf-sep { position: absolute; left: 1725px; top: 8px; width: 24px; height: 66px; background: linear-gradient(to top right, transparent 48%, #8a8a8a 48%, #8a8a8a 52%, transparent 52%); display: block; }
.dock-row { position: relative; display: flex; padding-left: 310px; }
.dock-item { width: 118px; height: 140px; flex: none; position: relative; }
.dock-item svg { display: block; }
.dock-gap { width: 59px; flex: none; display: block; }
.running::after { content: ""; position: absolute; left: 47px; bottom: 0; width: 24px; height: 5px; background: #f5fbff; box-shadow: 0 0 6px #bfe6ff; }
.badge-text { font: bold 22px "Liberation Sans", sans-serif; fill: #fff; text-anchor: middle; }
.compass { font: bold 9px "Liberation Sans", sans-serif; fill: #fff; text-anchor: middle; }
.line-text { font: bold 25px "Liberation Sans", sans-serif; fill: #1aad1c; text-anchor: middle; letter-spacing: -.5px; }
.sub-text { font: bold 66px "Liberation Sans", sans-serif; fill: #ff9a1e; text-anchor: middle; }
.term-text { font: bold 24px "Liberation Mono", monospace; fill: #eee; }
```

FILE: script.js
```js
var BOARD = ["827914653","691735248","435682197","589167432","173429865","246358719","918243576","762591384","354876921"];
var M18 = ["...91.653","6...3.2..","..5......","5.91.7.3.","1.34..865","24.3.8.1.",".1..4..7.","7..5...84","3..8.692."];
var M19 = M18.slice(0, 8).concat(["...8.692."]);
var M21 = ["...91..53","6...3.2..","..5......","5.91.7.3.","1.34..8.5","24.3...1.",".1..4..7.","7..5...8.","...8.692."];

function sudoku(mask, hl) {
  var grid = document.createElement("div");
  grid.className = "sudoku";
  for (var b = 0; b < 9; b++) {
    var box = document.createElement("div");
    box.className = "box box-row-b";
    var br = Math.floor(b / 3), bc = b % 3;
    for (var i = 0; i < 9; i++) {
      var r = br * 3 + Math.floor(i / 3), c = bc * 3 + i % 3;
      var cell = document.createElement("div");
      cell.className = "cell";
      cell.textContent = BOARD[r][c];
      if (mask && mask[r][c] === ".") cell.classList.add("blank");
      (hl || []).forEach(function (h) {
        if (h[0] === r && h[1] === c) { cell.classList.remove("blank"); cell.classList.add(h[2]); }
      });
      box.appendChild(cell);
    }
    grid.appendChild(box);
  }
  return grid;
}

function el(cls, text) {
  var d = document.createElement("div");
  d.className = cls;
  if (text) d.textContent = text;
  return d;
}

function slide(o) {
  var s = el("slide");
  if (o.list) {
    s.classList.add("slide-list");
    s.appendChild(el("list-head", "1. How does it work?"));
    s.appendChild(el("list-sub", "a. Gradient Descent"));
    s.appendChild(el("list-sub", "b. Random Walk"));
    var h = el("list-head");
    h.innerHTML = "2. What is the greatest challenge <i><b>in your AI</b></i>?";
    s.appendChild(h);
    s.appendChild(el("list-sub", "a. Decide the difficulty of the Sudoku"));
    s.appendChild(el("list-sub list-sub-b", "b. Solve Sudoku in human's way(For a. and teach human)"));
    return s;
  }
  s.appendChild(el("slide-title", "Random Walk"));
  s.appendChild(el("slide-line", "1 : Fill board (unique solution)"));
  s.appendChild(el("slide-line", "2 : Randomly eliminate a cell that"));
  s.appendChild(el("slide-line line-indent", "still has only one solution"));
  s.appendChild(sudoku(o.mask, o.hl));
  var c = el("counts");
  var a = document.createElement("span");
  a.className = o.red ? "c-red" : "c-green";
  a.textContent = "Answer Count : " + (o.red ? 2 : 1);
  if (o.blank === undefined) a.classList.add("plain");
  c.appendChild(a);
  if (o.blank !== undefined) {
    var b = document.createElement("span");
    b.className = "c-gray";
    b.textContent = "Blank : " + o.blank;
    c.appendChild(b);
  }
  s.appendChild(c);
  return s;
}

var SLIDES = [
  { n: 15, box: true },
  { n: 16, current: true, blank: 1, hl: [[4, 4, "hl-pink"]] },
  { n: 17, blank: 2, mask: ["827914653","691735248","435682197","589167432","1734.9865","246358719","918243576","762591384","354876921"], hl: [[2, 5, "hl-pink"]] },
  { n: 18, blank: 45, mask: M18, hl: [[8, 0, "hl-pink"]] },
  { n: 19, box: true, red: true, blank: 46, mask: M19, hl: [[5, 7, "hl-red"]] },
  { n: 20, box: true, blank: 46, mask: M19, hl: [[5, 5, "hl-pink"]] },
  { n: 21, box: true, blank: 50, mask: M21, hl: [[3, 2, "hl-pink"]], mark: true },
  { n: 22, box: true, list: true, hideNum: true }
];

var list = document.getElementById("thumbs");
SLIDES.forEach(function (o) {
  var row = el("thumb-row" + (o.current ? " is-current" : ""));
  var num = el("thumb-num", String(o.n));
  if (o.hideNum) num.textContent = "";
  row.appendChild(num);
  var t = el("thumb");
  var inner = el("thumb-inner");
  inner.appendChild(slide(o));
  t.appendChild(inner);
  if (o.box) t.appendChild(el("thumb-box"));
  if (o.mark) t.appendChild(el("thumb-mark"));
  row.appendChild(t);
  list.appendChild(row);
});

var main = slide({ blank: 1, hl: [[4, 4, "hl-pink"]] });
main.classList.add("slide-main");
document.getElementById("mainSlide").appendChild(main);
```
